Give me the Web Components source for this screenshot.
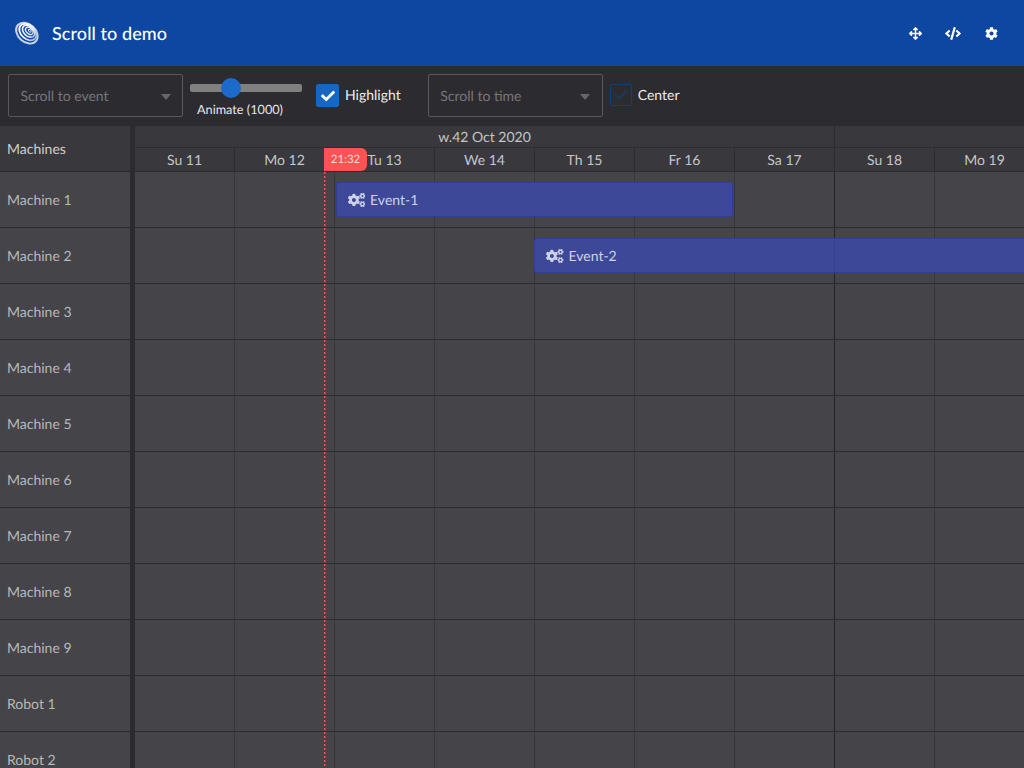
<!DOCTYPE html>
<html lang="en">
<head>
<meta charset="utf-8">
<title>Scroll to demo</title>
<style>
html,body{margin:0;padding:0;width:1024px;height:768px;overflow:hidden;background:#2c2b30;font-family:Lato,"Open Sans",sans-serif;text-rendering:geometricPrecision;}
</style>
</head>
<body>
<demo-app>
  <app-bar slot="bar" heading="Scroll to demo"></app-bar>
  <tool-bar slot="tools">
    <combo-box placeholder="Scroll to event"></combo-box>
    <range-slider style="margin-left:7px">Animate (1000)</range-slider>
    <check-box checked style="margin-left:14px">Highlight</check-box>
    <combo-box placeholder="Scroll to time" style="margin-left:27px"></combo-box>
    <check-box style="margin-left:7px">Center</check-box>
  </tool-bar>
  <gantt-chart slot="chart"></gantt-chart>
</demo-app>
<script>
const ICONS={
 move:['0 0 512 512','M352.201 425.775l-79.196 79.196c-9.373 9.373-24.568 9.373-33.941 0l-79.196-79.196c-15.119-15.119-4.411-40.971 16.971-40.97h51.162L228 284H127.196v51.162c0 21.382-25.851 32.09-40.971 16.971L7.029 272.937c-9.373-9.373-9.373-24.569 0-33.941L86.225 159.8c15.119-15.119 40.971-4.411 40.971 16.971V228H228V127.196h-51.23c-21.382 0-32.09-25.851-16.971-40.971l79.196-79.196c9.373-9.373 24.568-9.373 33.941 0l79.196 79.196c15.119 15.119 4.411 40.971-16.971 40.971h-51.162V228h100.804v-51.162c0-21.382 25.851-32.09 40.97-16.971l79.196 79.196c9.373 9.373 9.373 24.569 0 33.941L425.773 352.2c-15.119 15.119-40.971 4.411-40.97-16.971V284H284v100.804h51.23c21.382 0 32.09 25.851 16.971 40.971z'],
 code:['0 0 640 512','M278.9 511.5l-61-17.7c-6.4-1.8-10-8.5-8.2-14.9L346.2 8.7c1.8-6.4 8.5-10 14.9-8.2l61 17.7c6.4 1.8 10 8.5 8.2 14.9L293.8 503.3c-1.9 6.4-8.5 10.1-14.9 8.2zm-114-112.2l43.5-46.4c4.6-4.9 4.3-12.7-.8-17.2L117 256l90.6-79.7c5.1-4.5 5.5-12.3.8-17.2l-43.5-46.4c-4.5-4.8-12.1-5.1-17-.5L3.8 247.2c-5.1 4.7-5.1 12.8 0 17.5l144.1 135.1c4.9 4.6 12.5 4.4 17-.5zm327.2.6l144.1-135.1c5.1-4.7 5.1-12.8 0-17.5L492.1 112.1c-4.8-4.5-12.4-4.3-17 .5L431.6 159c-4.6 4.9-4.3 12.7.8 17.2L523 256l-90.6 79.7c-5.1 4.5-5.5 12.3-.8 17.2l43.5 46.4c4.5 4.9 12.1 5.1 17 .6z'],
 cog:['0 0 512 512','M487.4 315.7l-42.6-24.6c4.3-23.2 4.3-47 0-70.2l42.6-24.6c4.9-2.8 7.1-8.6 5.5-14-11.1-35.6-30-67.8-54.7-94.6-3.8-4.1-10-5.1-14.8-2.3L380.8 110c-17.9-15.4-38.5-27.3-60.8-35.1V25.8c0-5.6-3.9-10.5-9.4-11.7-36.7-8.2-74.3-7.8-109.2 0-5.5 1.2-9.4 6.1-9.4 11.7V75c-22.2 7.9-42.8 19.8-60.8 35.1L88.7 85.5c-4.9-2.8-11-1.9-14.8 2.3-24.7 26.7-43.6 58.9-54.7 94.6-1.7 5.4.6 11.2 5.5 14L67.3 221c-4.3 23.2-4.3 47 0 70.2l-42.6 24.6c-4.9 2.8-7.1 8.6-5.5 14 11.1 35.6 30 67.8 54.7 94.6 3.8 4.1 10 5.1 14.8 2.3l42.6-24.6c17.9 15.4 38.5 27.3 60.8 35.1v49.2c0 5.6 3.9 10.5 9.4 11.7 36.7 8.2 74.3 7.8 109.2 0 5.5-1.2 9.4-6.1 9.4-11.7v-49.2c22.2-7.9 42.8-19.8 60.8-35.1l42.6 24.6c4.9 2.8 11 1.9 14.8-2.3 24.7-26.7 43.6-58.9 54.7-94.6 1.5-5.5-.7-11.3-5.6-14.1zM256 336c-44.1 0-80-35.9-80-80s35.9-80 80-80 80 35.9 80 80-35.9 80-80 80z'],
 cogs:['0 0 640 512','M512.1 191l-8.2 14.3c-3 5.3-9.4 7.5-15.1 5.4-11.8-4.4-22.6-10.7-32.1-18.6-4.6-3.8-5.8-10.5-2.8-15.7l8.2-14.3c-6.9-8-12.3-17.3-15.9-27.4h-16.5c-6 0-11.2-4.3-12.2-10.3-2-12-2.1-24.6 0-37.1 1-6 6.2-10.4 12.2-10.4h16.5c3.6-10.1 9-19.4 15.9-27.4l-8.2-14.3c-3-5.2-1.9-11.9 2.8-15.7 9.5-7.9 20.4-14.2 32.1-18.6 5.7-2.1 12.1.1 15.1 5.4l8.2 14.3c10.5-1.9 21.2-1.9 31.7 0L552 6.3c3-5.3 9.4-7.5 15.1-5.4 11.8 4.4 22.6 10.7 32.1 18.6 4.6 3.8 5.8 10.5 2.8 15.7l-8.2 14.3c6.9 8 12.3 17.3 15.9 27.4h16.5c6 0 11.2 4.3 12.2 10.3 2 12 2.1 24.6 0 37.1-1 6-6.2 10.4-12.2 10.4h-16.5c-3.6 10.1-9 19.4-15.9 27.4l8.2 14.3c3 5.2 1.9 11.9-2.8 15.7-9.5 7.9-20.4 14.2-32.1 18.6-5.7 2.1-12.1-.1-15.1-5.4l-8.2-14.3c-10.4 1.9-21.2 1.9-31.7 0zm-10.5-58.8c38.5 29.6 82.4-14.3 52.8-52.8-38.5-29.7-82.4 14.3-52.8 52.8zM386.3 286.1l33.7 16.8c10.1 5.8 14.5 18.1 10.5 29.1-8.9 24.2-26.4 46.4-42.6 65.8-7.4 8.9-20.2 11.1-30.3 5.3l-29.1-16.8c-16 13.7-34.6 24.6-54.9 31.7v33.6c0 11.6-8.3 21.6-19.7 23.6-24.6 4.2-50.4 4.4-75.9 0-11.5-2-20-11.9-20-23.6V418c-20.3-7.2-38.9-18-54.9-31.7L74 403c-10 5.8-22.9 3.6-30.3-5.3-16.2-19.4-33.3-41.6-42.2-65.7-4-10.9.4-23.2 10.5-29.1l33.3-16.8c-3.9-20.9-3.9-42.4 0-63.4L12 205.8c-10.1-5.8-14.6-18.1-10.5-29 8.9-24.2 26-46.4 42.2-65.8 7.4-8.9 20.2-11.1 30.3-5.3l29.1 16.8c16-13.7 34.6-24.6 54.9-31.7V57.1c0-11.5 8.2-21.5 19.6-23.5 24.6-4.2 50.5-4.4 76-.1 11.5 2 20 11.9 20 23.6v33.6c20.3 7.2 38.9 18 54.9 31.7l29.1-16.8c10-5.8 22.9-3.6 30.3 5.3 16.2 19.4 33.2 41.6 42.1 65.8 4 10.9.1 23.2-10 29.1l-33.7 16.8c3.9 21 3.9 42.5 0 63.5zm-117.6 21.1c59.2-77-28.7-164.9-105.7-105.7-59.2 77 28.7 164.9 105.7 105.7zm243.4 182.7l-8.2 14.3c-3 5.3-9.4 7.5-15.1 5.4-11.8-4.4-22.6-10.7-32.1-18.6-4.6-3.8-5.8-10.5-2.8-15.7l8.2-14.3c-6.9-8-12.3-17.3-15.9-27.4h-16.5c-6 0-11.2-4.3-12.2-10.3-2-12-2.1-24.6 0-37.1 1-6 6.2-10.4 12.2-10.4h16.5c3.6-10.1 9-19.4 15.9-27.4l-8.2-14.3c-3-5.2-1.9-11.9 2.8-15.7 9.5-7.9 20.4-14.2 32.1-18.6 5.7-2.1 12.1.1 15.1 5.4l8.2 14.3c10.5-1.9 21.2-1.9 31.7 0l8.2-14.3c3-5.3 9.4-7.5 15.1-5.4 11.8 4.4 22.6 10.7 32.1 18.6 4.6 3.8 5.8 10.5 2.8 15.7l-8.2 14.3c6.9 8 12.3 17.3 15.9 27.4h16.5c6 0 11.2 4.3 12.2 10.3 2 12 2.1 24.6 0 37.1-1 6-6.2 10.4-12.2 10.4h-16.5c-3.6 10.1-9 19.4-15.9 27.4l8.2 14.3c3 5.2 1.9 11.9-2.8 15.7-9.5 7.9-20.4 14.2-32.1 18.6-5.7 2.1-12.1-.1-15.1-5.4l-8.2-14.3c-10.4 1.9-21.2 1.9-31.7 0zM501.6 431c38.5 29.6 82.4-14.3 52.8-52.8-38.5-29.6-82.4 14.3-52.8 52.8z'],
 check:['0 0 512 512','M173.898 439.404l-166.4-166.4c-9.997-9.997-9.997-26.206 0-36.204l36.203-36.204c9.997-9.998 26.207-9.998 36.204 0L192 312.69 432.095 72.596c9.997-9.997 26.207-9.997 36.204 0l36.203 36.204c9.997 9.997 9.997 26.206 0 36.204l-294.4 294.401c-9.998 9.997-26.207 9.997-36.204-.001z']
};
const svg=(n,w,h)=>`<svg width="${w}" height="${h}" viewBox="${ICONS[n][0]}" fill="currentColor" aria-hidden="true"><path d="${ICONS[n][1]}"/></svg>`;
class Base extends HTMLElement{
  render(html){ (this.shadowRoot||this.attachShadow({mode:'open'})).innerHTML=html; }
}
customElements.define('demo-app',class extends Base{connectedCallback(){this.render(`<style>
:host{display:flex;flex-direction:column;width:1024px;height:768px;overflow:hidden}
</style><slot name="bar"></slot><slot name="tools"></slot><slot name="chart"></slot>`)}});
customElements.define('app-bar',class extends Base{connectedCallback(){this.render(`<style>
:host{display:flex;align-items:center;height:66px;flex:none;background:#0d47a1;color:#fff;box-sizing:border-box;padding:0 26.5px 0 14px}
h1{margin:0 0 0 12px;font:500 18px/24px Lato,sans-serif;letter-spacing:.07px;flex:1}
.logo{display:block}
.acts{display:flex;align-items:center;gap:23.5px}
.acts span{display:flex;flex:none;justify-content:center}
</style>
<svg class="logo" width="26" height="26" viewBox="-1 -1 30 30" fill="none" stroke="url(#g)">
 <defs><linearGradient id="g" gradientUnits="userSpaceOnUse" x1="0" y1="0" x2="28" y2="0"><stop offset="0" stop-color="#fff"/><stop offset=".55" stop-color="#eef2f8"/><stop offset="1" stop-color="#8ea6cf"/></linearGradient></defs>
 <g transform="rotate(42 14 14)">
  <ellipse cx="14" cy="14.2" rx="14" ry="10.2" stroke-width="2.2" stroke="#c9d4e8"/>
  <ellipse cx="14" cy="12.6" rx="11.2" ry="7.9" stroke-width="2.1"/>
  <ellipse cx="14" cy="11.2" rx="8.2" ry="5.6" stroke-width="1.9"/>
  <ellipse cx="14.3" cy="10.4" rx="5" ry="3.3" stroke-width="1.6"/>
  <ellipse cx="14.6" cy="9.9" rx="2" ry="1.2" stroke-width="1.1"/>
 </g>
</svg>
<h1>${this.getAttribute('heading')}</h1>
<div class="acts"><span>${svg('move',13,13)}</span><span>${svg('code',16,13)}</span><span>${svg('cog',13,13)}</span></div>`)}});
customElements.define('tool-bar',class extends Base{connectedCallback(){this.render(`<style>
:host{display:flex;align-items:flex-start;height:60px;flex:none;box-sizing:border-box;padding:8px 8px 0;background:#2c2b30}
</style><slot></slot>`)}});
customElements.define('combo-box',class extends Base{connectedCallback(){this.render(`<style>
:host{display:flex;align-items:center;justify-content:space-between;width:175px;height:43px;flex:none;box-sizing:border-box;border:1px solid #59585c;border-radius:2px;padding:0 11.5px 0 11.5px;color:#77767b;font:14px/20px Lato,sans-serif}
i{display:block;width:0;height:0;border:5.5px solid transparent;border-top:6px solid #67666b;border-bottom:0;margin-top:2px}
</style><span>${this.getAttribute('placeholder')}</span><i></i>`)}});
customElements.define('range-slider',class extends Base{connectedCallback(){this.render(`<style>
:host{display:flex;flex-direction:column;align-items:center;width:112px;flex:none;margin-top:10px;color:#e6e6e8;font:12.7px/16px Lato,sans-serif}
.track{position:relative;width:100%;height:8px;background:#808080;border-radius:2px}
.thumb{position:absolute;left:31px;top:-6px;width:20px;height:20px;border-radius:50%;background:#1c6bca}
.lab{margin-top:9px;margin-right:12px;white-space:nowrap}
</style><div class="track"><div class="thumb"></div></div><div class="lab"><slot></slot></div>`)}});
customElements.define('check-box',class extends Base{connectedCallback(){const on=this.hasAttribute('checked');this.render(`<style>
:host{display:flex;align-items:flex-start;flex:none;color:#eeeef0;font:14px/20px Lato,sans-serif;margin-top:10px}
.box{display:flex;align-items:center;justify-content:center;box-sizing:border-box;width:${on?23:22}px;height:${on?23:22}px;border-radius:2px;background:${on?'#1766c2':'transparent'};border:1px solid ${on?'#1766c2':'#123f74'};color:${on?'#fff':'#1f3651'}}
.lab{margin-left:6px;margin-top:1px}
</style><div class="box">${svg('check',14,14)}</div><div class="lab"><slot></slot></div>`)}});
customElements.define('gantt-event',class extends Base{connectedCallback(){this.render(`<style>
:host{position:absolute;top:10px;height:35px;left:${this.getAttribute('start')}px;width:${this.getAttribute('span')}px;box-sizing:border-box;display:flex;align-items:center;padding-left:11px;gap:5px;background:rgba(60,74,170,.82);border:1px solid rgba(47,60,150,.9);border-radius:3px;color:#ced2e8;font:14px/18px Lato,sans-serif;white-space:nowrap;z-index:1}
svg{display:block;flex:none}
</style>${svg('cogs',17.5,14)}<slot></slot>`)}});
customElements.define('now-marker',class extends Base{connectedCallback(){this.render(`<style>
:host{position:absolute;left:189px;top:22px;bottom:0;width:2px;z-index:2;background:linear-gradient(90deg,transparent 50%,rgba(69,68,73,.55) 50%),repeating-linear-gradient(#ff5252 0 2px,transparent 2px 4px)}
.tag{position:absolute;left:0;top:0;box-sizing:border-box;width:43px;height:23px;background:#ff5252;color:#ffd6d6;font:11.5px/23px Lato,sans-serif;text-align:center;border-radius:0 6px 6px 0}
</style><div class="tag"><slot></slot></div>`)}});
customElements.define('gantt-chart',class extends Base{connectedCallback(){
  const days=['Su 11','Mo 12','Tu 13','We 14','Th 15','Fr 16','Sa 17','Su 18','Mo 19'];
  const names=['Machine 1','Machine 2','Machine 3','Machine 4','Machine 5','Machine 6','Machine 7','Machine 8','Machine 9','Robot 1','Robot 2'];
  const cell=i=>`<div class="c${i===6?' wk':''}"></div>`;
  const evs={0:'<gantt-event start="200.6" span="397.4">Event-1</gantt-event>',1:'<gantt-event start="399" span="760">Event-2</gantt-event>'};
  this.render(`<style>
:host{display:flex;flex:1;min-height:0;overflow:hidden;background:#2c2b30;font-family:Lato,sans-serif}
.left{width:130px;flex:none;margin-right:5px}
.lh{height:46px;box-sizing:border-box;background:#39383d;border-bottom:1px solid #29282c;display:flex;align-items:center;padding-left:7px;color:#cfcfd1;font-size:14px}
.ln{height:56px;box-sizing:border-box;background:#454449;border-bottom:1px solid #2c2b30;display:flex;align-items:center;padding-left:7px;color:#b8b8ba;font-size:14px}
.right{flex:1;min-width:0;position:relative;overflow:hidden}
.inner{width:1000px}
.wkrow{display:flex;height:22px;background:#39383d;box-sizing:border-box;border-bottom:1px solid #2c2b30;color:#c6c6c8;font-size:14px;line-height:21px;text-align:center}
.wkrow div{box-sizing:border-box}
.wkrow .w1{width:700px;border-right:1px solid #2c2b30}
.dayrow{display:flex;height:24px;background:#39383d;box-sizing:border-box;border-bottom:1px solid #2c2b30;color:#c6c6c8;font-size:14px;line-height:24px;text-align:center}
.dayrow div{width:100px;flex:none;box-sizing:border-box;border-right:1px solid #2c2b30}
.row{position:relative;display:flex;height:56px;box-sizing:border-box;background:#454449;border-bottom:1px solid #2c2b30}
.c{width:100px;flex:none;box-sizing:border-box;border-right:1px solid #37363b}
.c.wk{border-right-color:#232226}
</style>
<div class="left"><div class="lh">Machines</div>${names.map(n=>`<div class="ln">${n}</div>`).join('')}</div>
<div class="right"><div class="inner">
<div class="wkrow"><div class="w1">w.42 Oct 2020</div><div></div></div>
<div class="dayrow">${days.map(d=>`<div>${d}</div>`).join('')}</div>
${names.map((n,r)=>`<div class="row">${days.map((d,i)=>cell(i)).join('')}${evs[r]||''}</div>`).join('')}
</div><now-marker>21:32</now-marker></div>`);
}});
</script>
</body>
</html>
